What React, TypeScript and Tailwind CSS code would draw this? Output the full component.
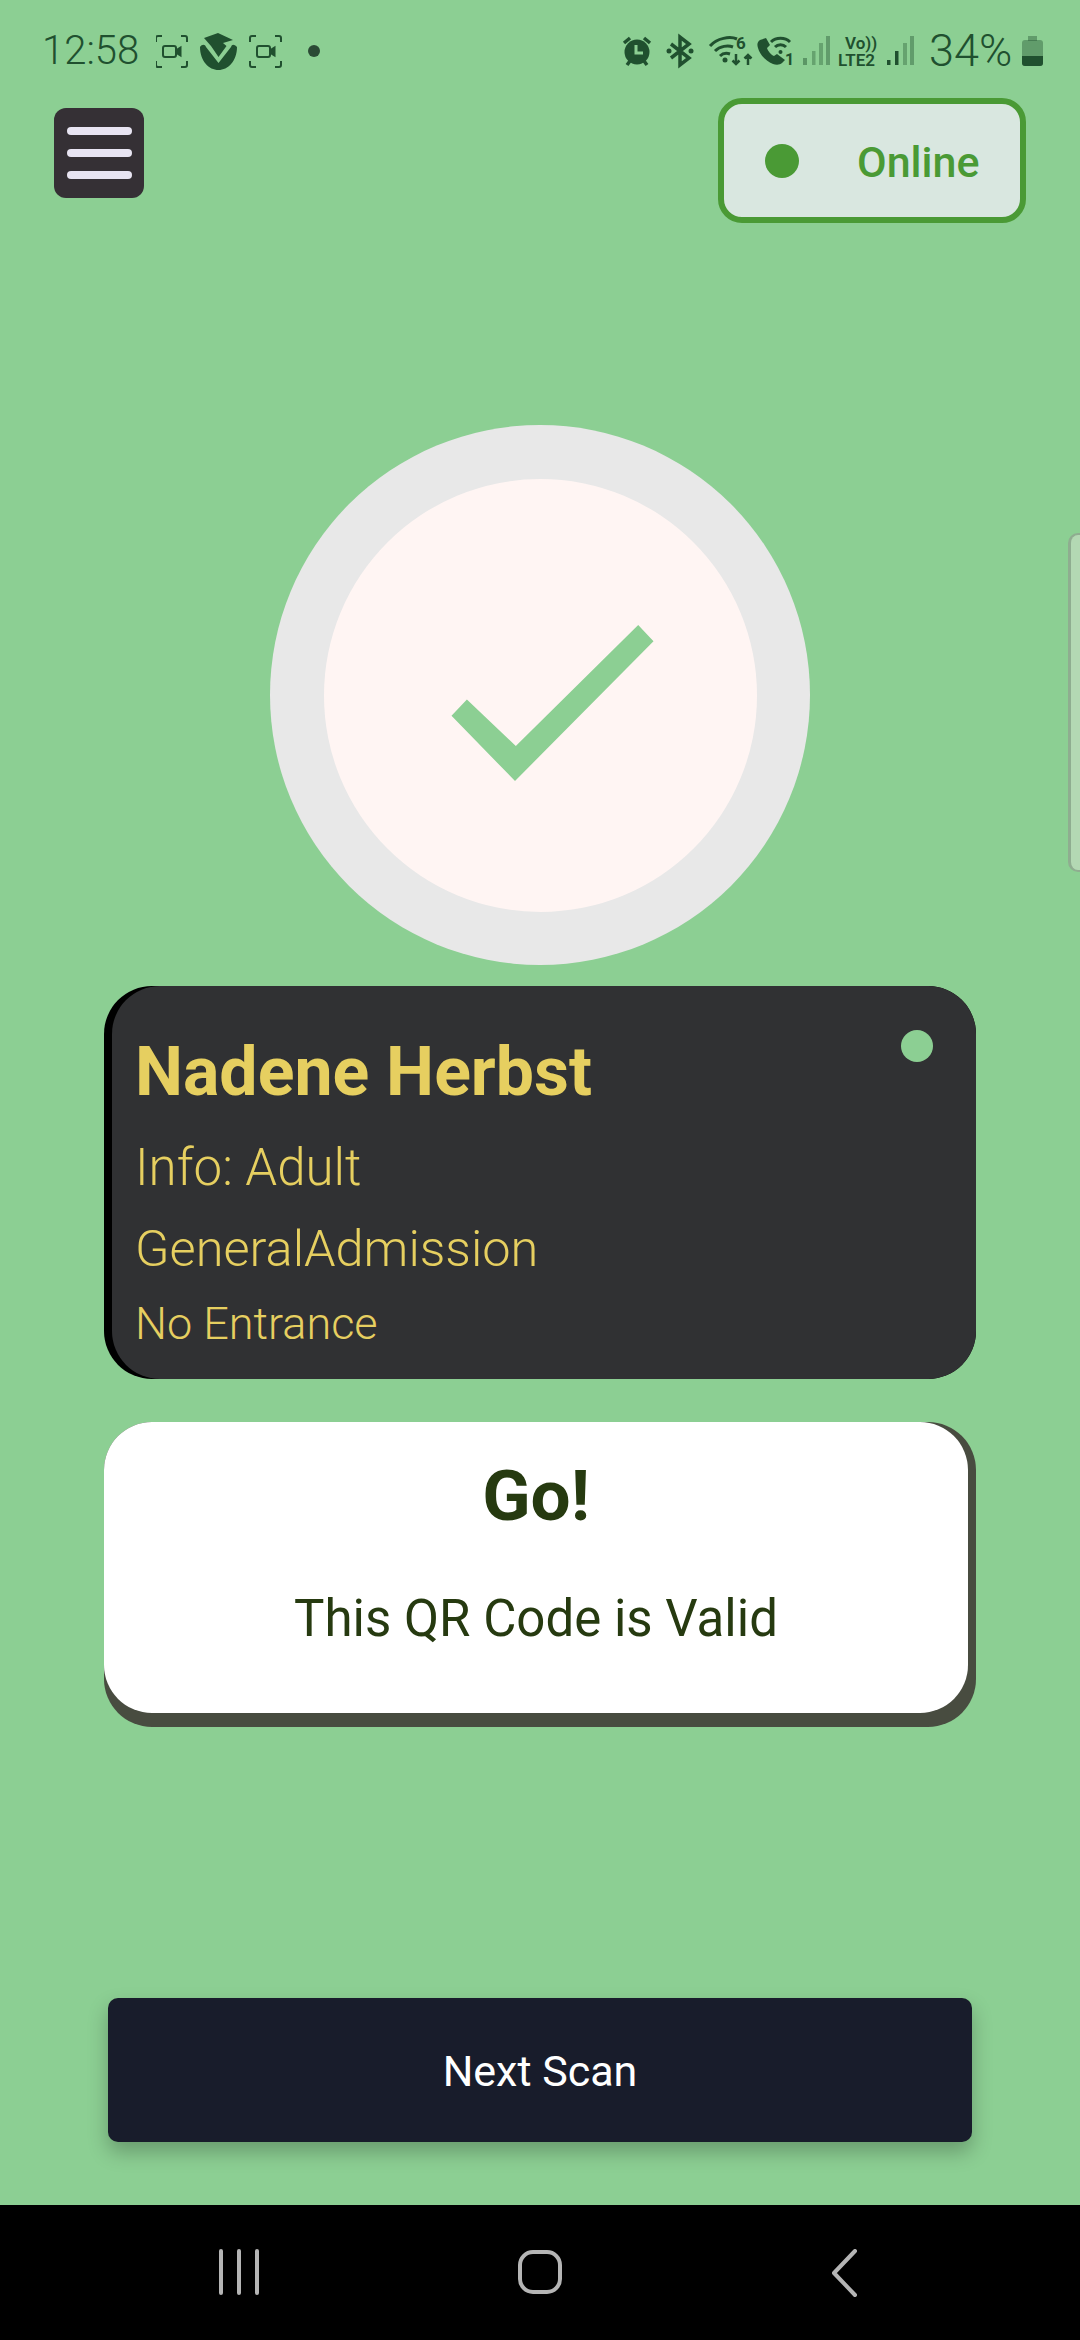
import type { ReactNode } from 'react';

const DARK = '#20502f';

function RecIcon({ x }: { x: number }) {
  return (
    <g transform={`translate(${x} 0)`} fill="none" stroke={DARK} strokeWidth="2">
      <path d="M0 42v-4a2 2 0 0 1 2-2h4M25 36h4a2 2 0 0 1 2 2v4M31 61v4a2 2 0 0 1-2 2h-4M6 67H2a2 2 0 0 1-2-2v-4" />
      <rect x="7" y="46" width="13" height="11" rx="2" />
      <path d="M20.500 50l4-2.500v8l-4-2.500z" fill={DARK} />
    </g>
  );
}

function StatusLeft() {
  return (
    <svg width="170" height="42" viewBox="156 30 170 42" className="ml-[18px]">
      <RecIcon x={156} />
      <path d="M204 38L218 33L233 40L223 43L226.500 46L218.500 57L211 46z" fill={DARK} />
      <path d="M200 47C200 61 209 70 218.500 70C228 70 237 61 237 47C234 44 232 44 231 47L218.500 63L206 47C205 44 202 44 200 47z" fill={DARK} />
      <RecIcon x={250} />
      <circle cx="314" cy="51" r="6" fill="#2b4a35" />
    </svg>
  );
}

function StatusRight() {
  return (
    <svg width="295" height="42" viewBox="620 30 295 42">
      {/* alarm */}
      <circle cx="637" cy="52" r="12.500" fill={DARK} />
      <path d="M636 45v8h7" fill="none" stroke="#8ccf93" strokeWidth="3" />
      <path d="M624 43l6-5M650 43l-6-5M627 65l3-4M647 65l-3-4" stroke={DARK} strokeWidth="3.500" fill="none" />
      {/* bluetooth */}
      <path d="M671 44l18 14-9 7V37l9 7-18 14" fill="none" stroke={DARK} strokeWidth="3.500" />
      <circle cx="669" cy="51" r="2.500" fill={DARK} />
      <circle cx="691" cy="51" r="2.500" fill={DARK} />
      {/* wifi 6 */}
      <path d="M710 46c7-8 20-10 27-7M715 51c5-5 13-6 18-4M720 56c3-3 7-3 10-2" fill="none" stroke={DARK} strokeWidth="3" />
      <circle cx="725" cy="60" r="2.500" fill={DARK} />
      <text x="736" y="49" fontSize="17" fontWeight="700" fill={DARK} fontFamily="Roboto, sans-serif">6</text>
      <path d="M736 54v10M732.500 60.500l3.500 3.500 3.500-3.500M748 65v-10M744.500 58.500l3.500-3.500 3.500 3.500" fill="none" stroke={DARK} strokeWidth="2.500" />
      {/* wifi call */}
      <path d="M760 40c-3 2-3 5-2 8 2 7 8 13 15 16 3 1 7 1 9-1l3-3-8-6-3 2c-3-1-6-5-7-8l3-3-4-7z" fill={DARK} />
      <path d="M771 42c5-5 14-5 19 0M775 47c3-3 8-3 11 0" fill="none" stroke={DARK} strokeWidth="3" />
      <circle cx="780.500" cy="52" r="2" fill={DARK} />
      <text x="785" y="65" fontSize="16" fontWeight="700" fill={DARK} fontFamily="Roboto, sans-serif">1</text>
      {/* signal 1 */}
      <g fill={DARK}>
        <rect x="803" y="58" width="4" height="7" opacity="0.45" />
        <rect x="812" y="51" width="3.500" height="14" opacity="0.35" />
        <rect x="819" y="43" width="4" height="22" opacity="0.35" />
        <rect x="826" y="36" width="4" height="29" opacity="0.4" />
      </g>
      {/* volte */}
      <text x="845" y="49" fontSize="17" fontWeight="600" fill={DARK} fontFamily="Roboto, sans-serif">Vo))</text>
      <text x="838" y="65.500" fontSize="17" fontWeight="600" fill={DARK} fontFamily="Roboto, sans-serif">LTE2</text>
      {/* signal 2 */}
      <g fill={DARK}>
        <rect x="887" y="60" width="3.500" height="5" />
        <rect x="895" y="51" width="3.500" height="14" />
        <rect x="903" y="43" width="4" height="22" opacity="0.35" />
        <rect x="910" y="36" width="4" height="29" opacity="0.4" />
      </g>
    </svg>
  );
}

function Battery() {
  return (
    <svg width="22" height="32" viewBox="1018 35 22 32" className="ml-[10px]">
      <rect x="1024" y="36" width="9" height="5" fill={DARK} opacity="0.4" />
      <rect x="1018" y="40" width="21" height="26" rx="3" fill={DARK} opacity="0.4" />
      <path d="M1018 56h21v7a3 3 0 0 1-3 3h-15a3 3 0 0 1-3-3z" fill={DARK} />
    </svg>
  );
}

function StatusBar() {
  return (
    <div className="flex h-[98px] items-start pt-[30px] pl-[42px] text-[#20502f]">
      <span className="w-[96px] text-[40px] leading-[42px] font-light">12:58</span>
      <StatusLeft />
      <div className="ml-[294px] flex items-center">
        <StatusRight />
        <span className="ml-[14px] text-[45px] leading-[42px] font-light">34%</span>
        <Battery />
      </div>
    </div>
  );
}

function Card({ outer, children }: { outer: string; children: ReactNode }) {
  return <div className={`mx-auto w-[872px] rounded-[48px] ${outer}`}>{children}</div>;
}

export default function App() {
  return (
    <div className="relative flex h-[2340px] w-[1080px] flex-col overflow-hidden bg-[#8ccf93] font-['Roboto',sans-serif]">
      <StatusBar />

      <div className="flex items-start justify-between px-[54px]">
        <button className="mt-[10px] flex h-[90px] w-[90px] flex-col items-center justify-center gap-[14px] rounded-[12px] bg-[#353035]">
          <span className="h-[8px] w-[65px] rounded-full bg-[#e8e4f2]" />
          <span className="h-[8px] w-[65px] rounded-full bg-[#e8e4f2]" />
          <span className="h-[8px] w-[65px] rounded-full bg-[#e8e4f2]" />
        </button>
        <div className="flex h-[125px] w-[308px] items-center rounded-[24px] border-[6px] border-[#4a9a35] bg-[#d9e7e0] pl-[41px]">
          <span className="h-[34px] w-[34px] rounded-full bg-[#4a9a35]" />
          <span className="ml-[58px] pt-[3px] text-[43px] leading-none font-medium text-[#4a9a35]">Online</span>
        </div>
      </div>

      <div className="mx-auto mt-[202px] flex h-[540px] w-[540px] items-center justify-center rounded-full bg-[#e8e8e8]">
        <div className="h-[433px] w-[433px] rounded-full bg-[#fff5f3]">
          <svg width="433" height="433" viewBox="323.500 478.500 433 433">
            <path d="M451 715.300L466.400 699L515.300 745.500L637.700 624.500L653 640.800L514.500 780.500z" fill="#8ccf93" />
          </svg>
        </div>
      </div>

      <div className="mt-[21px]">
        <Card outer="bg-black pl-[8px]">
          <div className="h-[393px] rounded-[48px] bg-[#303133] pt-[48px] pl-[23px] text-[#e6cf60]">
            <div className="flex items-start justify-between pr-[43px]">
              <h1 className="text-[68px] leading-[76px] font-bold">Nadene Herbst</h1>
              <span className="mt-[-4px] h-[32px] w-[32px] rounded-full bg-[#8ccf93]" />
            </div>
            <p className="mt-[24px] text-[51px] leading-[68px] font-light">Info: Adult</p>
            <p className="mt-[13px] text-[50.500px] leading-[68px] font-light">GeneralAdmission</p>
            <p className="mt-[13px] text-[45px] leading-[56px] font-light">No Entrance</p>
          </div>
        </Card>
      </div>

      <div className="mt-[43px]">
        <Card outer="bg-[#484c40] pr-[8px] pb-[14px]">
          <div className="h-[291px] rounded-[48px] bg-white pt-[36px] text-center text-[#263a10]">
            <h2 className="text-[71px] leading-[76px] font-bold">Go!</h2>
            <p className="mt-[55px] text-[51px] leading-[60px]">This QR Code is Valid</p>
          </div>
        </Card>
      </div>

      <div className="flex flex-1 items-end justify-center pb-[63px]">
        <button className="h-[144px] w-[864px] rounded-[10px] bg-[#181c2b] pt-[2px] text-[43px] text-white shadow-[0_10px_20px_rgba(0,0,0,0.25)]">
          Next Scan
        </button>
      </div>

      <div className="flex h-[135px] items-start bg-black pt-[44px]">
        <svg width="40" height="46" viewBox="0 0 40 46" className="ml-[219px]" stroke="#b5b5b5" strokeWidth="4" strokeLinecap="round">
          <path d="M2 2v42M20 2v42M38 2v42" />
        </svg>
        <svg width="46" height="46" viewBox="0 0 46 46" className="ml-[258px]" fill="none" stroke="#b5b5b5" strokeWidth="4">
          <rect x="3" y="3" width="40" height="40" rx="13" />
        </svg>
        <svg width="28" height="48" viewBox="0 0 28 48" className="ml-[267px]" fill="none" stroke="#b5b5b5" strokeWidth="4" strokeLinecap="round" strokeLinejoin="round">
          <path d="M25 2L4 24L25 46" />
        </svg>
      </div>

      {/* edge panel handle */}
      <div className="absolute top-[533px] right-0 h-[339px] w-[12px] rounded-l-[10px] border-y-[2px] border-l-[3px] border-[#8fad90] bg-[#b3d8b3]" />
    </div>
  );
}
